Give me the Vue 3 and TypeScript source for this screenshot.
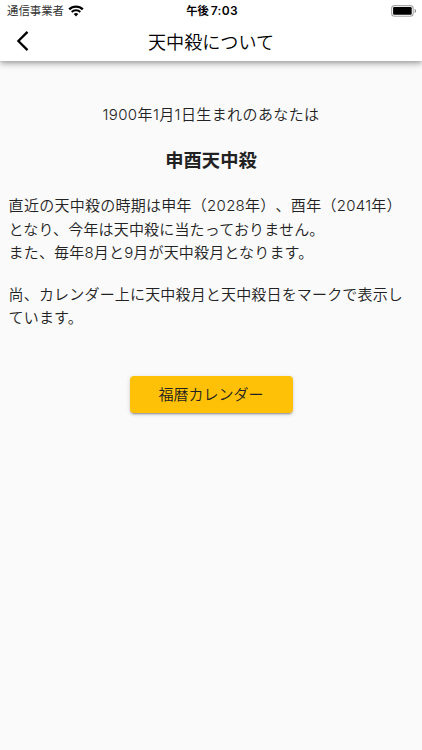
<script setup lang="ts">
const birthLine: string = '1900年1月1日生まれのあなたは'
const periodLines: string[] = [
  '直近の天中殺の時期は申年（2028年）、酉年（2041年）',
  'となり、今年は天中殺に当たっておりません。',
  'また、毎年8月と9月が天中殺月となります。',
]
const noteLines: string[] = ['尚、カレンダー上に天中殺月と天中殺日をマークで表示し', 'ています。']
</script>

<template>
  <div class="screen">
    <header class="header">
      <div class="status">
        <div class="carrier">
          <span>通信事業者</span>
          <svg class="wifi" width="16" height="12" viewBox="0 0 16 12">
            <path d="M1.200 4.400a9.600 9.600 0 0 1 13.600 0" fill="none" stroke="#000" stroke-width="2.300" />
            <path d="M3.700 7a6.100 6.100 0 0 1 8.600 0" fill="none" stroke="#000" stroke-width="2" />
            <path d="M8 11.400 5.700 9.100a3.200 3.200 0 0 1 4.600 0z" />
          </svg>
        </div>
        <div class="time">午後<span class="digits">7:03</span></div>
        <div class="power">
          <svg width="26" height="12" viewBox="0 0 26 12">
            <rect x=".6" y=".6" width="21.6" height="10.6" rx="3" fill="none" stroke="#a8a8a8" stroke-width="1.1" />
            <rect x="2.1" y="2.1" width="18.6" height="7.6" rx="1.2" />
            <path d="M23.700 4v4c.8-.4 1.300-1.100 1.300-2s-.5-1.600-1.300-2z" fill="#888" />
          </svg>
        </div>
      </div>
      <div class="nav">
        <button class="back" aria-label="戻る">
          <svg width="14" height="22" viewBox="0 0 14 22">
            <path d="M11.500 1.900 2.400 11l9.100 9.100" fill="none" stroke="#000" stroke-width="2.300" />
          </svg>
        </button>
        <h1 class="title">天中殺について</h1>
      </div>
    </header>
    <main class="content">
      <p class="birth">{{ birthLine }}</p>
      <h2 class="result">申酉天中殺</h2>
      <p class="text period">
        <span v-for="line in periodLines" :key="line" class="line">{{ line }}</span>
      </p>
      <p class="text">
        <span v-for="line in noteLines" :key="line" class="line">{{ line }}</span>
      </p>
      <button class="calendar">福暦カレンダー</button>
    </main>
  </div>
</template>

<style>
body {
  background: #fafafa;
}
</style>

<style scoped>
.screen {
  min-height: 750px;
  background: #fafafa;
  color: #222;
  font-family: Inter, 'Noto Sans CJK JP', sans-serif;
  font-weight: 350;
  text-spacing-trim: space-all;
}
.header {
  position: relative;
  height: 61px;
  background: #fff;
  color: #000;
  box-shadow: 0 2px 4px -1px rgba(0, 0, 0, 0.2), 0 4px 5px rgba(0, 0, 0, 0.14), 0 1px 10px rgba(0, 0, 0, 0.12);
}
.status {
  display: grid;
  grid-template-columns: 1fr auto 1fr;
  align-items: center;
  height: 21px;
  padding: 0 5px 0 7px;
  line-height: 21px;
}
.carrier {
  display: flex;
  align-items: center;
  gap: 4px;
  font-size: 11.4px;
  font-weight: 400;
  color: #333;
}
.time {
  font-size: 11.3px;
  font-weight: 700;
}
.digits {
  margin-left: 2px;
  font-size: 12px;
  font-weight: 600;
  letter-spacing: 0.3px;
}
.power {
  display: flex;
  justify-content: flex-end;
}
.nav {
  display: grid;
  grid-template-columns: 40px 1fr 40px;
  align-items: center;
  height: 40px;
}
.back {
  display: flex;
  justify-content: flex-end;
  padding: 0 10px 0 0;
  border: 0;
  background: none;
}
.title {
  margin: 0;
  padding-top: 2px;
  font-size: 18.1px;
  font-weight: 350;
  line-height: 38px;
  text-align: center;
}
.content {
  display: flex;
  flex-direction: column;
  padding: 41px 9px 0;
}
.birth {
  margin: 0;
  font-size: 15px;
  letter-spacing: 0.4px;
  line-height: 25px;
  text-align: center;
}
.result {
  margin: 20px 0;
  font-size: 18.3px;
  font-weight: 700;
  line-height: 27px;
  text-align: center;
}
.text {
  margin: 0 0 18px;
  font-size: 15px;
  letter-spacing: 0.17px;
  line-height: 23.5px;
}
.text .line {
  display: block;
  margin-left: -0.4px;
  white-space: nowrap;
}
.period .line:first-child {
  letter-spacing: 0.27px;
}
.calendar {
  align-self: center;
  width: 163px;
  height: 37px;
  margin-top: 28px;
  padding: 0;
  border: 0;
  border-radius: 4px;
  background: #ffc107;
  box-shadow: 0 3px 1px -2px rgba(0, 0, 0, 0.2), 0 2px 2px rgba(0, 0, 0, 0.14), 0 1px 5px rgba(0, 0, 0, 0.12);
  color: #222;
  font-family: inherit;
  font-size: 15px;
  font-weight: 350;
  line-height: 37px;
}
</style>
